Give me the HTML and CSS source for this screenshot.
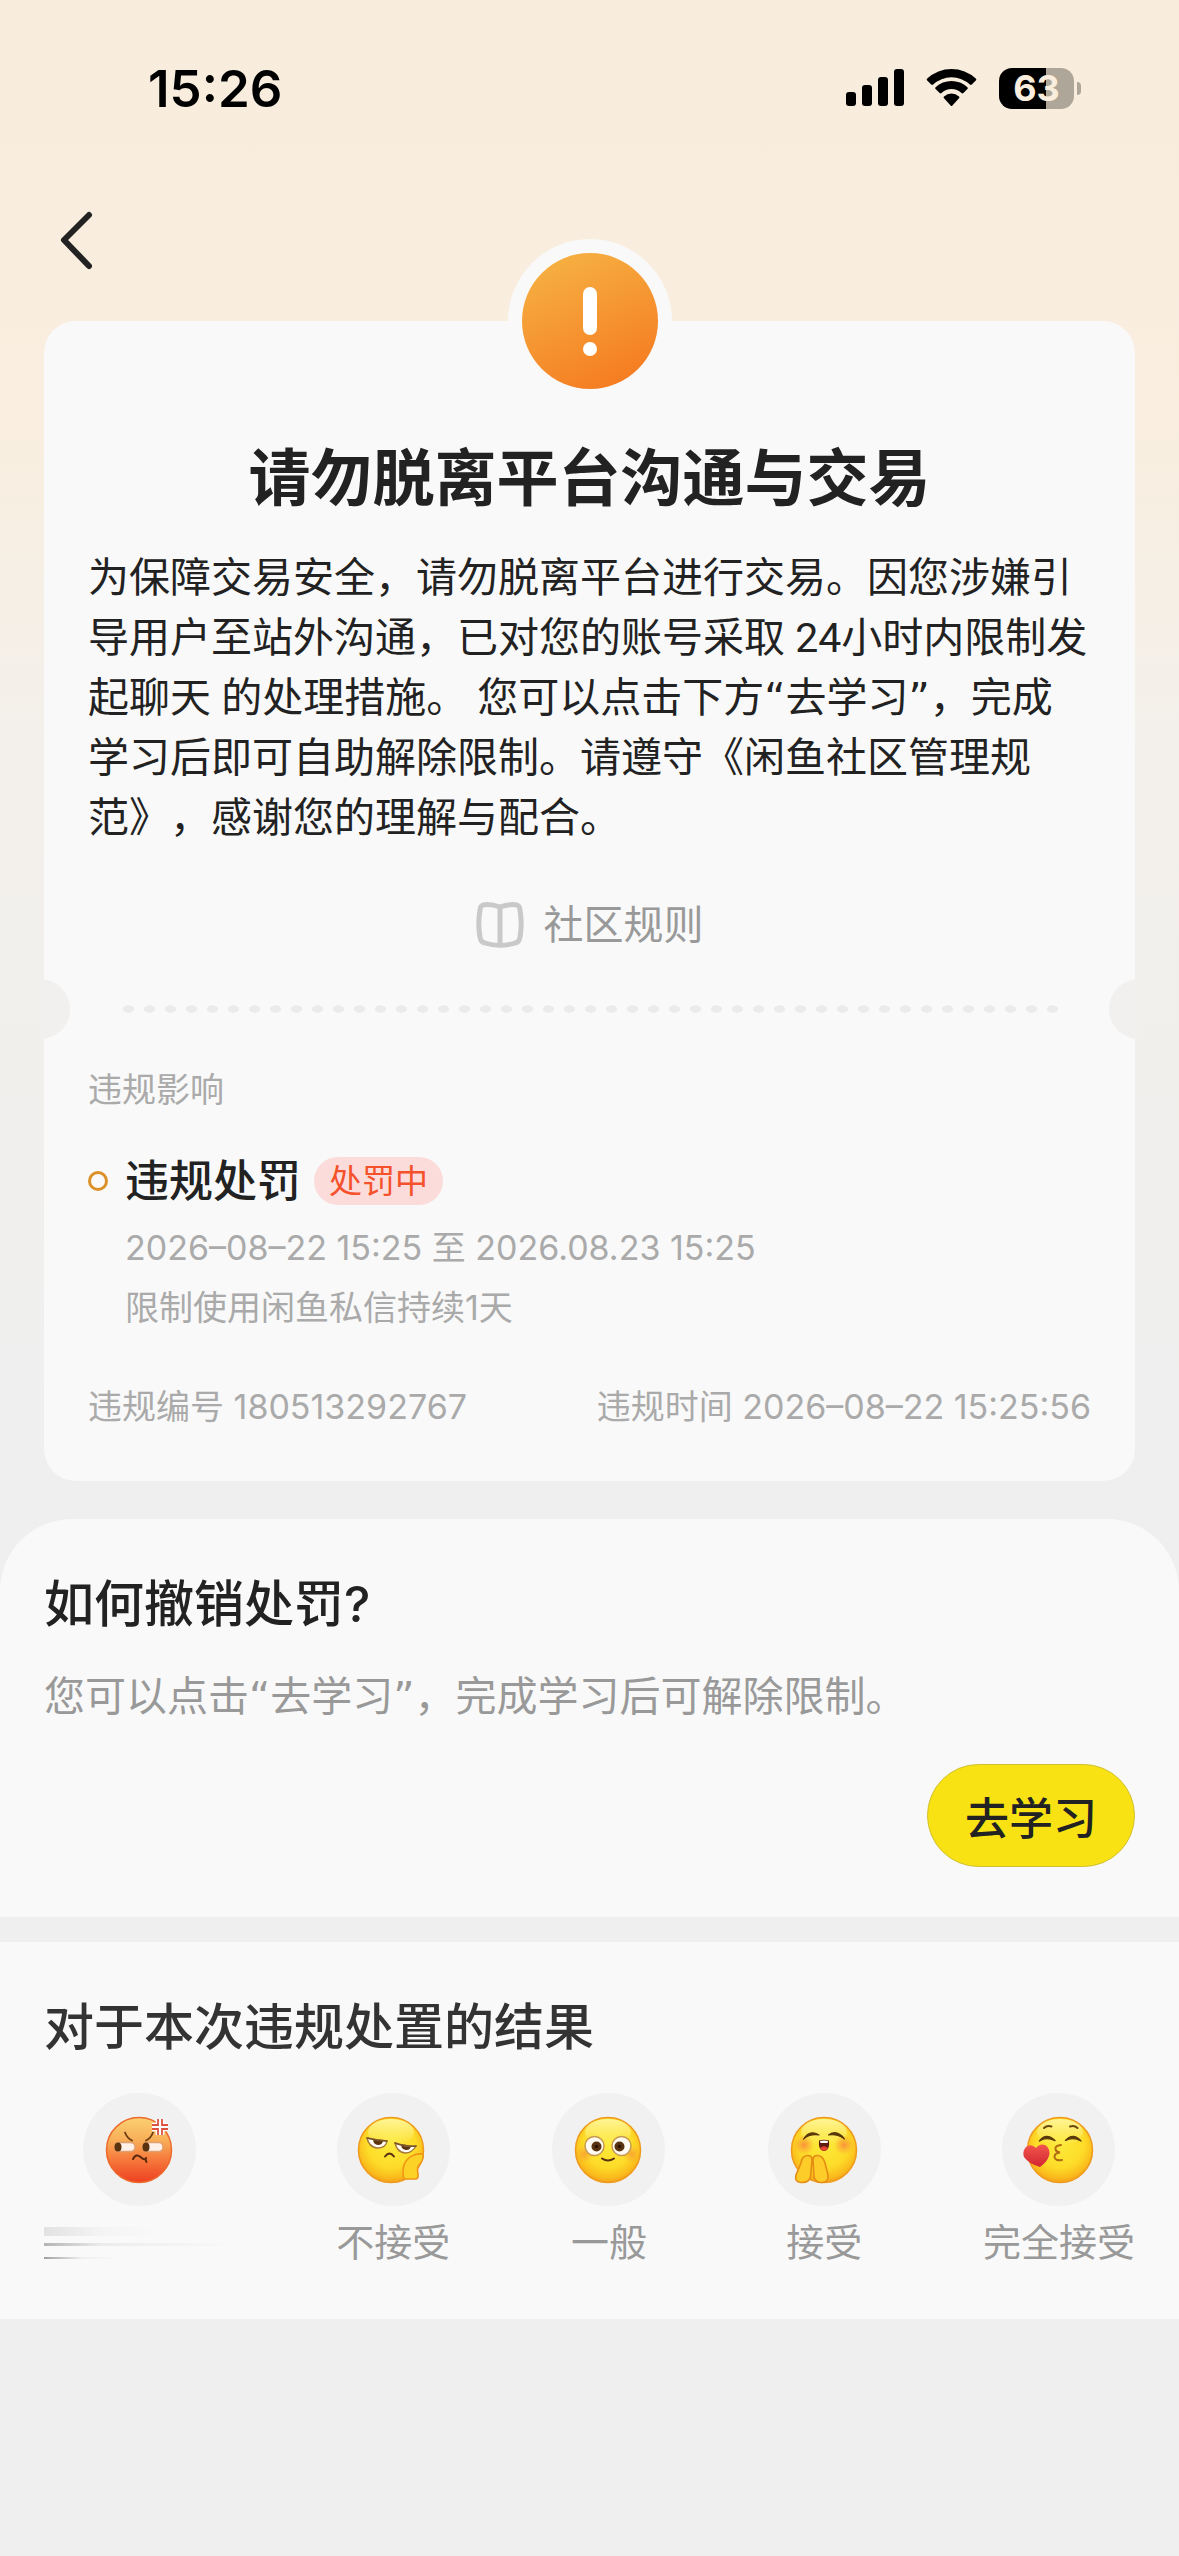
FILE: index.html
```html
<!DOCTYPE html>
<html lang="zh-CN">
<head>
  <meta charset="UTF-8" />
  <meta name="viewport" content="width=device-width" />
  <title>违规处罚</title>
  <link rel="stylesheet" href="styles.css">
</head>
<body>

  <header>
    <div class="status-bar">
      <div class="time">15:26</div>
      <div class="status-icons">
        <svg width="58" height="40" viewBox="0 0 58 40">
          <rect x="0" y="24" width="10" height="14" rx="3" />
          <rect x="16" y="17" width="10" height="21" rx="3" />
          <rect x="32" y="9" width="10" height="29" rx="3" />
          <rect x="48" y="1" width="10" height="37" rx="3" />
        </svg>
        <svg width="51" height="40" viewBox="0 0 51 40">
          <path d="M1.2 10.6a1.3 1.3 0 0 0 0 1.9l4 4a1.4 1.4 0 0 0 1.9 0a27 27 0 0 1 36.8 0a1.4 1.4 0 0 0 1.9 0l4-4a1.3 1.3 0 0 0 0-1.9a35.5 35.5 0 0 0-48.6 0z" />
          <path d="M9.6 19.2a1.3 1.3 0 0 0 0 1.9l4 3.9a1.4 1.4 0 0 0 1.9 0a14.8 14.8 0 0 1 20 0a1.4 1.4 0 0 0 1.9 0l4-3.9a1.3 1.3 0 0 0 0-1.9a23.2 23.2 0 0 0-31.8 0z" />
          <path d="M18 28.4a1.2 1.2 0 0 0 0 1.8l6.6 7.2a1.2 1.2 0 0 0 1.8 0l6.6-7.2a1.2 1.2 0 0 0 0-1.8a11.4 11.4 0 0 0-15 0z" />
        </svg>
        <div class="battery"><span>63</span></div>
      </div>
    </div>
    <nav class="nav">
      <button class="back" aria-label="返回">
        <svg width="36" height="60" viewBox="0 0 36 60">
          <path d="M31 5L6 30L31 56" fill="none" stroke="#222" stroke-width="6" stroke-linecap="round" stroke-linejoin="round" />
        </svg>
      </button>
    </nav>
  </header>

  <main>
    <section class="card">
      <svg class="alert" viewBox="0 0 164 164">
        <defs>
          <linearGradient id="orange" x1="0.3" y1="0" x2="0.75" y2="1">
            <stop offset="0" stop-color="#f6b042" />
            <stop offset="1" stop-color="#f57a20" />
          </linearGradient>
        </defs>
        <circle cx="82" cy="82" r="82" fill="#f9f9f9" />
        <circle cx="82" cy="82" r="68" fill="url(#orange)" />
        <rect x="75" y="48" width="14" height="48" rx="7" fill="#fff" />
        <circle cx="82" cy="110" r="7" fill="#fff" />
      </svg>

      <h1>请勿脱离平台沟通与交易</h1>
      <p class="notice">为保障交易安全，请勿脱离平台进行交易。因您涉嫌引导用户至站外沟通，已对您的账号采取 24小时内限制发起聊天 的处理措施。 您可以点击下方<span class="quote">“</span>去学习<span class="quote">”</span>，完成<br>学习后即可自助解除限制。请遵守《闲鱼社区管理规范》，感谢您的理解与配合。</p>

      <a class="rules" href="#">
        <svg width="48" height="48" viewBox="0 0 48 48" fill="none" stroke="#c9c9c9" stroke-width="5" stroke-linejoin="round">
          <path d="M24 6C18 4 12 3 7 4Q4 5 4 9C2.5 18 2.5 28 4 36Q4.5 41 9 42C18 45 30 45 39 42Q43.5 41 44 36C45.5 28 45.5 18 44 9Q44 5 41 4C36 3 30 4 24 6V43" />
        </svg>
        社区规则
      </a>

      <div class="divider"></div>

      <h2 class="label">违规影响</h2>
      <div class="penalty">
        <span class="ring"></span>
        <h3>违规处罚</h3>
        <span class="badge">处罚中</span>
      </div>
      <div class="detail">
        <p>2026–08–22 15:25 至 2026.08.23 15:25</p>
        <p>限制使用闲鱼私信持续1天</p>
      </div>
      <div class="record">
        <span>违规编号 180513292767</span>
        <span>违规时间 2026–08–22 15:25:56</span>
      </div>
    </section>

    <section class="panel revoke">
      <h2>如何撤销处罚?</h2>
      <p>您可以点击<span class="quote">“</span>去学习<span class="quote">”</span>，完成学习后可解除限制。</p>
      <button class="study">去学习</button>
    </section>

    <section class="panel feedback">
      <h2>对于本次违规处置的结果</h2>
      <div class="faces">
        <svg class="defs" width="0" height="0">
          <defs>
            <linearGradient id="angry" x1="0" y1="0" x2="0" y2="1">
              <stop offset="0" stop-color="#fbd070" />
              <stop offset="0.35" stop-color="#f8ae58" />
              <stop offset="0.65" stop-color="#f6793c" />
              <stop offset="1" stop-color="#ee3f20" />
            </linearGradient>
            <radialGradient id="yellow" cx="0.5" cy="0.4" r="0.62">
              <stop offset="0" stop-color="#fdea3c" />
              <stop offset="0.6" stop-color="#fddc28" />
              <stop offset="0.85" stop-color="#fabb1c" />
              <stop offset="1" stop-color="#f29818" />
            </radialGradient>
            <linearGradient id="shine" x1="0" y1="0" x2="0" y2="1">
              <stop offset="0" stop-color="#fffbb0" stop-opacity="0.8" />
              <stop offset="1" stop-color="#fffbb0" stop-opacity="0" />
            </linearGradient>
            <radialGradient id="blush">
              <stop offset="0" stop-color="#f8803c" stop-opacity="0.8" />
              <stop offset="1" stop-color="#f8903c" stop-opacity="0" />
            </radialGradient>
            <linearGradient id="heart" x1="0" y1="0" x2="0" y2="1">
              <stop offset="0" stop-color="#f2554c" />
              <stop offset="1" stop-color="#d32631" />
            </linearGradient>
          </defs>
        </svg>

        <button class="face" aria-label="完全不接受">
          <span class="circle">
            <svg viewBox="0 0 72 72">
              <circle cx="36" cy="36" r="32.5" fill="url(#angry)" stroke="#ec6a2c" stroke-width="1.5" />
              <g stroke="#e0a070" stroke-width="1.5">
                <rect x="12" y="28.5" width="20" height="9" rx="4.5" fill="#fff0e8" />
                <rect x="40" y="28.5" width="20" height="9" rx="4.5" fill="#fff0e8" />
              </g>
              <ellipse cx="15" cy="33" rx="3.5" ry="4.5" fill="#59320f" />
              <ellipse cx="43" cy="33" rx="3.5" ry="4.5" fill="#59320f" />
              <path d="M22 18.5Q24 24 29 26.5M50 18.5Q48 24 43 26.5" fill="none" stroke="#6b3a10" stroke-width="1.8" stroke-linecap="round" />
              <path d="M30 45Q33 39 37.5 43T43 44Q42 46 43.5 48" fill="none" stroke="#59280c" stroke-width="2" stroke-linecap="round" stroke-linejoin="round" />
              <path d="M55 5V11H49M59 5V11H65M55 21V15H49M59 21V15H65" fill="none" stroke="#fff" stroke-width="4.5" />
              <path d="M55 5V11H49M59 5V11H65M55 21V15H49M59 21V15H65" fill="none" stroke="#dc5140" stroke-width="1.8" />
            </svg>
          </span>
          <span class="smear"><i></i><i></i><i></i></span>
        </button>

        <button class="face">
          <span class="circle">
            <svg viewBox="0 0 72 72">
              <circle cx="34" cy="36" r="32.5" fill="url(#yellow)" stroke="#ee9a1c" stroke-width="1.5" />
              <ellipse cx="34" cy="18" rx="23" ry="13" fill="url(#shine)" />
              <path d="M10 24Q19 26 30 27Q29 34 20 34Q12 33 10 24ZM38 29Q50 33 59 32Q55 39 48 39Q40 38 38 29Z" fill="#fffdf5" stroke="#a4793a" stroke-width="1.5" stroke-linejoin="round" />
              <path d="M16 25.5Q21 26.5 26 26.8Q25.5 31 21 31Q16.5 30.5 16 25.5ZM44 31.5Q49 33 54 32.5Q52.5 36.5 49 36Q45 35.5 44 31.5Z" fill="#5d3510" />
              <path d="M10 24Q19 26.5 30 27M38 29Q50 33 59 32" fill="none" stroke="#7a5428" stroke-width="1.6" stroke-linecap="round" />
              <path d="M28 42.5Q32.5 36.5 37 42.5" fill="none" stroke="#59320f" stroke-width="2" stroke-linecap="round" />
              <path d="M66 40C58 39 50 43 47 51C45 57 46 61 47 65H58Q62 65 61 60C60 56 60 54 62 51Q67 46 66 40Z" fill="#fdd226" stroke="#ee9416" stroke-width="1.6" stroke-linejoin="round" />
            </svg>
          </span>
          不接受
        </button>

        <button class="face">
          <span class="circle">
            <svg viewBox="0 0 72 72">
              <circle cx="35" cy="36" r="32.5" fill="url(#yellow)" stroke="#ee9a1c" stroke-width="1.5" />
              <ellipse cx="35" cy="18" rx="23" ry="13" fill="url(#shine)" />
              <circle cx="12" cy="40" r="9" fill="url(#blush)" opacity="0.7" />
              <circle cx="58" cy="40" r="9" fill="url(#blush)" opacity="0.7" />
              <circle cx="21.5" cy="32" r="9.5" fill="#fffaf2" stroke="#c69a50" stroke-width="1.5" />
              <circle cx="48.5" cy="32" r="9.5" fill="#fffaf2" stroke="#c69a50" stroke-width="1.5" />
              <circle cx="23.5" cy="32.5" r="5" fill="#59320f" />
              <circle cx="46.5" cy="32.5" r="5" fill="#59320f" />
              <circle cx="23.5" cy="32.5" r="1.8" fill="#281404" />
              <circle cx="46.5" cy="32.5" r="1.8" fill="#281404" />
              <path d="M29 44.5Q35 48.5 41 44.5" fill="none" stroke="#59320f" stroke-width="2" stroke-linecap="round" />
            </svg>
          </span>
          一般
        </button>

        <button class="face">
          <span class="circle">
            <svg viewBox="0 0 72 72">
              <circle cx="36" cy="36" r="32.5" fill="url(#yellow)" stroke="#ee9a1c" stroke-width="1.5" />
              <ellipse cx="36" cy="18" rx="23" ry="13" fill="url(#shine)" />
              <circle cx="16" cy="31" r="10" fill="url(#blush)" />
              <circle cx="56" cy="31" r="10" fill="url(#blush)" />
              <path d="M15.5 25Q22 15 31 21Q22 19.5 15.5 25ZM40.5 21Q49 15 56.5 25Q49 19.5 40.5 21Z" fill="#59390a" stroke="#59390a" stroke-width="1.2" stroke-linejoin="round" />
              <path d="M31 26.5Q36 25 41 26.5Q42 37 36 37Q30 37 31 26.5Z" fill="#5c1c10" />
              <path d="M32 27Q36 26 40 27L39.5 29H32.5Z" fill="#fff" />
              <path d="M32 34Q36 30.5 40 34Q38.5 37 36 37Q33.5 37 32 34Z" fill="#e84234" />
              <path d="M24 46Q24 41 19 41.5Q14 42 13 49L8 61Q6 68 13 68.5Q21 69 22.5 63ZM25 46Q25 41 30 41.5Q35 42 37 49L40 61Q41 68 34 68.5Q28 69 26 63Z" fill="#fdcc28" stroke="#e58c14" stroke-width="1.6" stroke-linejoin="round" />
            </svg>
          </span>
          接受
        </button>

        <button class="face">
          <span class="circle">
            <svg viewBox="0 0 72 72">
              <circle cx="37" cy="36" r="32.5" fill="url(#yellow)" stroke="#ee9a1c" stroke-width="1.5" />
              <ellipse cx="37" cy="18" rx="23" ry="13" fill="url(#shine)" />
              <path d="M21 14Q24 11 28.5 12.5M47 12.5Q51.5 11 54.5 14" fill="none" stroke="#6b4a10" stroke-width="2" stroke-linecap="round" />
              <path d="M16.5 27Q23 18 32 26.5Q23 22.5 16.5 27ZM42.5 26.5Q50 18 58 27Q50 22.5 42.5 26.5Z" fill="#59390a" stroke="#59390a" stroke-width="1.4" stroke-linejoin="round" />
              <path d="M38 31Q32 31.5 32.5 35Q33 38 37 38.5Q31.5 39 31.5 43Q32 47 39 46" fill="none" stroke="#b06a12" stroke-width="2" stroke-linecap="round" />
              <path d="M17 53Q6 50 1 43Q-1 37 3 33Q8 29 13 34Q17 29 22 31Q28 35 26 42Q24 48 17 53Z" fill="url(#heart)" />
            </svg>
          </span>
          完全接受
        </button>
      </div>
    </section>
  </main>

</body>
</html>
```
FILE: styles.css
```css
* {
  box-sizing: border-box;
}
body {
  margin: 0;
  min-height: 100vh;
  font-family: Inter, "Noto Sans CJK SC", sans-serif;
  color: #222;
  background: #efefef linear-gradient(#f8ecdd 0, #f9eedf 420px, #f3f0eb 740px, #efefef 1400px) no-repeat;
  text-spacing-trim: space-all;
}
h1, h2, h3, p {
  margin: 0;
}
button {
  border: none;
  padding: 0;
  background: none;
  font-family: inherit;
  color: inherit;
  cursor: pointer;
}
svg {
  display: block;
}

/* header */
.status-bar {
  display: flex;
  justify-content: space-between;
  align-items: center;
  height: 176px;
  padding: 0 105px 0 148px;
}
.time {
  font-size: 51px;
  font-weight: 600;
  color: #000;
}
.status-icons {
  display: flex;
  align-items: center;
  gap: 22px;
}
.battery {
  position: relative;
  width: 75px;
  height: 41px;
  border-radius: 13px;
  background: linear-gradient(90deg, #000 63%, #aea698 63%);
  color: #f9eddd;
  font-size: 36px;
  font-weight: 700;
  line-height: 41px;
  text-align: center;
}
.battery::after {
  content: "";
  position: absolute;
  top: 14px;
  right: -7px;
  width: 4px;
  height: 13px;
  border-radius: 0 4px 4px 0;
  background: #aea698;
}
.nav {
  height: 145px;
  padding: 34px 58px;
}

/* notice card */
.card {
  position: relative;
  margin: 0 44px;
  padding: 118px 44px 49px;
  border-radius: 32px;
  background: #f9f9f9;
}
.alert {
  position: absolute;
  top: -82px;
  left: 50%;
  width: 164px;
  margin-left: -82px;
}
h1 {
  font-size: 62px;
  font-weight: 700;
  line-height: 80px;
  text-align: center;
}
.notice {
  margin-top: 29px;
  font-family: Roboto, "Noto Sans CJK SC", sans-serif;
  font-size: 41px;
  line-height: 60px;
}
.quote {
  font-family: "DejaVu Sans", sans-serif;
  line-height: 1;
}
.rules {
  display: flex;
  justify-content: center;
  align-items: center;
  gap: 20px;
  margin-top: 52px;
  font-size: 40px;
  line-height: 50px;
  color: #999;
  text-decoration: none;
}
.divider {
  height: 8px;
  margin: 55px 30px 0;
  background: radial-gradient(ellipse 6px 4px at center, #ebebeb 85%, transparent) 0 0 / 21px 8px;
}
/* ticket notches on both edges */
.divider::before,
.divider::after {
  content: "";
  position: absolute;
  width: 30px;
  height: 60px;
  margin-top: -26px;
  background: #f1f0ee;
}
.divider::before {
  left: -4px;
  border-radius: 0 30px 30px 0;
}
.divider::after {
  right: -4px;
  border-radius: 30px 0 0 30px;
}
.label {
  margin-top: 52px;
  font-size: 34px;
  font-weight: 400;
  line-height: 50px;
  color: #aaa;
}
.penalty {
  display: flex;
  align-items: center;
  height: 48px;
  margin-top: 42px;
}
.ring {
  width: 20px;
  height: 20px;
  margin-right: 17px;
  border: 3px solid #dc9028;
  border-radius: 50%;
}
.penalty h3 {
  font-size: 44px;
  font-weight: 500;
  line-height: 48px;
}
.badge {
  margin-left: 13px;
  padding: 0 15px;
  border-radius: 24px;
  background: #fbdcda;
  color: #f4512c;
  font-size: 33px;
  line-height: 48px;
}
.detail {
  margin-top: 13px;
  padding-left: 37px;
  font-size: 34px;
  line-height: 60px;
  color: #aaa;
}
.record {
  display: flex;
  justify-content: space-between;
  margin-top: 44px;
  font-size: 34px;
  line-height: 50px;
  color: #aaa;
}

/* lower panels */
.panel {
  padding: 50px 44px;
  background: #f9f9f9;
}
.panel h2 {
  font-size: 50px;
  font-weight: 500;
  line-height: 70px;
}
.revoke {
  display: flex;
  flex-direction: column;
  margin-top: 38px;
  border-radius: 72px 72px 0 0;
}
.revoke p {
  margin-top: 28px;
  font-family: Roboto, "Noto Sans CJK SC", sans-serif;
  font-size: 41px;
  line-height: 60px;
  color: #999;
}
.study {
  align-self: flex-end;
  height: 103px;
  margin-top: 37px;
  padding: 0 37px;
  border: 1px solid #d0c030;
  border-radius: 52px;
  background: #f9e213;
  font-size: 44px;
  font-weight: 500;
}
.feedback {
  margin-top: 25px;
}
.feedback h2 {
  color: #333;
}
.faces {
  display: flex;
  justify-content: space-between;
  margin: 31px 0 2px;
}
.defs {
  position: absolute;
}
.face {
  display: flex;
  flex-direction: column;
  align-items: center;
  gap: 11px;
  font-size: 38px;
  line-height: 50px;
  color: #999;
}
.circle {
  display: flex;
  justify-content: center;
  align-items: center;
  width: 113px;
  height: 113px;
  border-radius: 50%;
  background: #f1f1f1;
}
.circle svg {
  width: 72px;
  height: 72px;
}
/* label smeared out to the right */
.smear {
  display: flex;
  flex-direction: column;
  gap: 7px;
  width: 190px;
  height: 50px;
  padding-top: 10px;
}
.smear i {
  height: 9px;
  background: linear-gradient(90deg, #e2e2e2, #f4f4f4 30%, transparent 60%);
}
.smear i:nth-child(2) {
  height: 3px;
  background: linear-gradient(90deg, #b4b4b4, #ececec 30%, transparent);
}
.smear i:nth-child(3) {
  height: 2px;
  margin-top: 4px;
  background: linear-gradient(90deg, #a0a0a0, #f0f0f0 20%, transparent 40%);
}
```
